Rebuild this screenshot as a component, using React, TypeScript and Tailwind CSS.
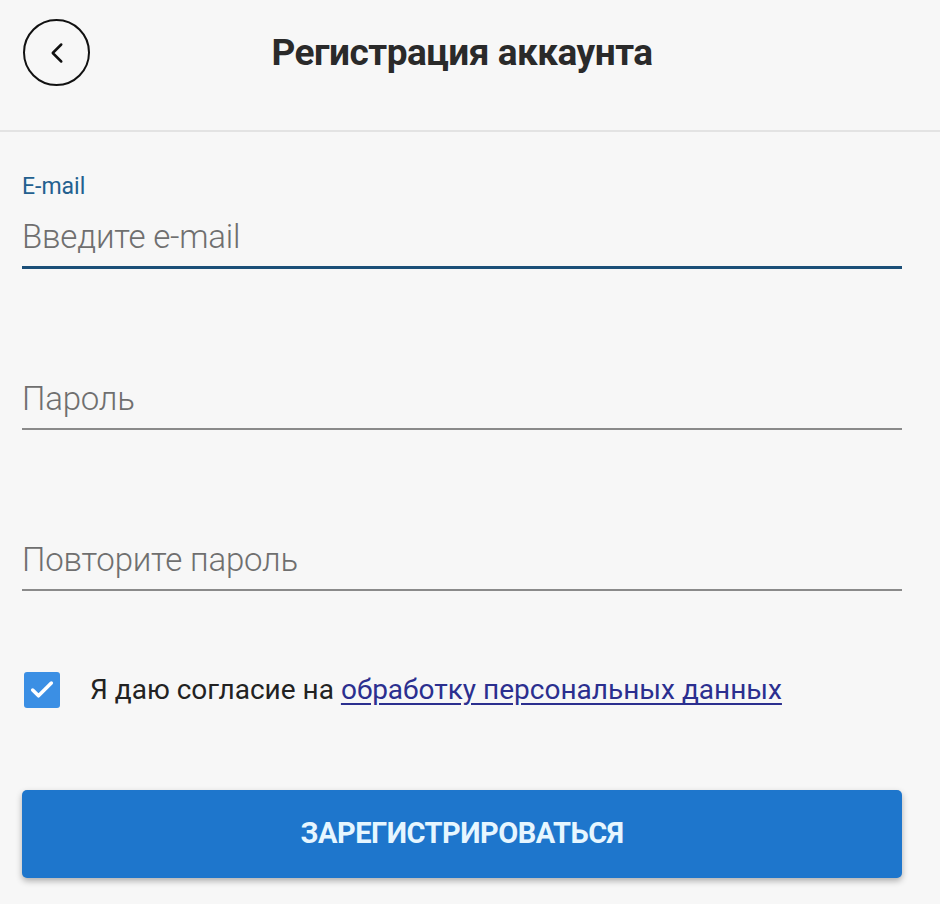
import { ChevronLeft, Check } from "lucide-react";

const font = { fontFamily: "Roboto, 'Liberation Sans', sans-serif" };

function Field({ label, placeholder, active }: { label?: string; placeholder: string; active?: boolean }) {
  return (
    <div className="flex flex-col">
      <div className="h-[30px] text-[23px] leading-[30px] text-[#23608f]">{label}</div>
      <div
        className={
          "h-[67px] flex items-end pb-[9px] text-[33px] leading-[40px] font-light text-[#6f6f6f] tracking-[-0.2px] " +
          (active ? "border-b-[3px] border-[#1b4f78]" : "border-b-2 border-[#8a8a8a]")
        }
      >
        {placeholder}
      </div>
    </div>
  );
}

export default function App() {
  return (
    <div className="w-[940px] h-[904px] bg-[#f7f7f7] overflow-hidden" style={font}>
      <header className="h-[132px] border-b-2 border-[#e3e3e3] flex items-start pt-[19px] px-[23px]">
        <button className="w-[67px] h-[67px] rounded-full border-2 border-[#111] flex items-center justify-center text-[#111]">
          <ChevronLeft className="w-[34px] h-[34px]" strokeWidth={1.75} />
        </button>
        <h1 className="flex-1 text-center pr-[83px] mt-[6px] text-[37px] font-bold text-[#2a2a2a] tracking-[-0.5px]">
          Регистрация аккаунта
        </h1>
      </header>

      <main className="px-[22px] pr-[38px] pt-[40px] flex flex-col">
        <Field label="E-mail" placeholder="Введите e-mail" active />
        <div className="h-[64px]" />
        <Field placeholder="Пароль" />
        <div className="h-[64px]" />
        <Field placeholder="Повторите пароль" />

        <div className="flex items-center mt-[78px] gap-[30px]">
          <div className="w-[36px] h-[36px] ml-[2px] rounded-[3px] bg-[#3b8fe4] flex items-center justify-center">
            <Check className="w-[28px] h-[28px] text-white" strokeWidth={3} />
          </div>
          <p className="text-[28px] text-[#222] tracking-[0px]">
            Я даю согласие на{" "}
            <a className="text-[#2b2f8f] underline underline-offset-4">обработку персональных данных</a>
          </p>
        </div>

        <button className="mt-[79px] h-[88px] w-full rounded-[5px] bg-[#1e76cc] shadow-[0_3px_6px_rgba(0,0,0,0.3)] text-[#e6f6ff] text-[29px] font-bold tracking-[-0.5px]">
          ЗАРЕГИСТРИРОВАТЬСЯ
        </button>
      </main>
    </div>
  );
}
